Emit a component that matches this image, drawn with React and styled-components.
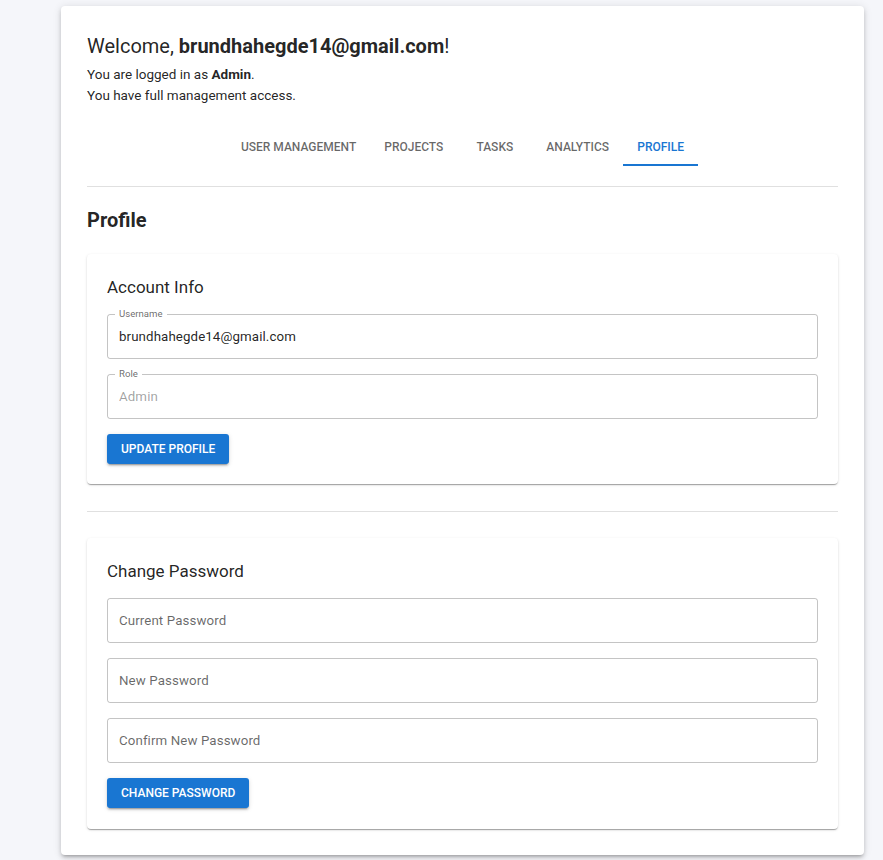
import React, { useState } from 'react';
import styled, { createGlobalStyle } from 'styled-components';

const GlobalStyle = createGlobalStyle`
  html, body {
    margin: 0;
    padding: 0;
    background: #f5f6fa;
    font-family: Roboto, "Helvetica Neue", Arial, sans-serif;
    color: rgba(0, 0, 0, 0.87);
  }
  * { box-sizing: border-box; }
`;

const Page = styled.div`
  padding: 6px 19px 5px 61px;
`;

const Panel = styled.main`
  background: #fff;
  border-radius: 4px;
  padding: 26px;
  box-shadow: 0 3px 3px -2px rgba(0, 0, 0, 0.2), 0 3px 4px 0 rgba(0, 0, 0, 0.14),
    0 1px 8px 0 rgba(0, 0, 0, 0.12);
`;

const Welcome = styled.h1`
  margin: 0;
  font-size: 20px;
  line-height: 28px;
  font-weight: 400;

  strong { font-weight: 700; }
`;

const Info = styled.p`
  margin: 0;
  font-size: 13.5px;
  line-height: 21px;

  &:first-of-type { margin-top: 4px; }
  strong { font-weight: 700; }
`;

const TabBar = styled.nav`
  display: flex;
  justify-content: center;
  margin-top: 18px;
`;

const Tab = styled.button`
  position: relative;
  height: 42px;
  min-width: 75px;
  padding: 3px 14px 0;
  border: none;
  background: none;
  font-family: inherit;
  font-size: 12px;
  font-weight: 500;
  letter-spacing: 0;
  text-transform: uppercase;
  color: ${p => (p.$active ? '#1976d2' : 'rgba(0, 0, 0, 0.6)')};
  cursor: pointer;

  &::after {
    content: '';
    position: absolute;
    left: 0;
    right: 0;
    bottom: 0;
    height: 2px;
    background: ${p => (p.$active ? '#1976d2' : 'transparent')};
  }
`;

const Divider = styled.hr`
  margin: ${p => p.$gap || 20}px 0 0;
  border: none;
  border-top: 1px solid #e0e0e0;
`;

const SectionTitle = styled.h2`
  margin: 19px 0 0;
  font-size: 20px;
  line-height: 28px;
  font-weight: 700;
`;

const Card = styled.section`
  margin-top: ${p => p.$top || 20}px;
  padding: 21px 20px ${p => p.$bottom || 20}px;
  background: #fff;
  border-radius: 4px;
  box-shadow: 0 2px 1px -1px rgba(0, 0, 0, 0.2), 0 1px 1px 0 rgba(0, 0, 0, 0.14),
    0 1px 3px 0 rgba(0, 0, 0, 0.12);
  display: flex;
  flex-direction: column;
  align-items: flex-start;
  gap: 15px;
`;

const CardTitle = styled.h3`
  margin: 0;
  font-size: 17px;
  line-height: 24px;
  font-weight: 400;
`;

const Field = styled.label`
  position: relative;
  display: flex;
  align-items: center;
  width: 100%;
  height: 45px;
  border: 1px solid rgba(0, 0, 0, 0.23);
  border-radius: 3px;
  padding: 0 11px;
`;

const FieldLabel = styled.span`
  position: absolute;
  top: -7px;
  left: 7px;
  padding: 0 4px;
  background: #fff;
  font-size: 9.6px;
  line-height: 12px;
  color: rgba(0, 0, 0, 0.6);
`;

const Input = styled.input`
  flex: 1;
  border: none;
  outline: none;
  background: transparent;
  padding: 0;
  font-family: inherit;
  font-size: 13.3px;
  letter-spacing: 0.1px;
  color: ${p => (p.disabled ? 'rgba(0, 0, 0, 0.38)' : 'rgba(0, 0, 0, 0.87)')};

  &::placeholder { color: rgba(0, 0, 0, 0.6); opacity: 1; }
`;

const Button = styled.button`
  height: 30px;
  padding: 0 14px;
  border: none;
  border-radius: 3px;
  background: #1976d2;
  color: #fff;
  font-family: inherit;
  font-size: 12px;
  font-weight: 500;
  letter-spacing: 0;
  text-transform: uppercase;
  cursor: pointer;
  box-shadow: 0 3px 1px -2px rgba(0, 0, 0, 0.2), 0 2px 2px 0 rgba(0, 0, 0, 0.14),
    0 1px 5px 0 rgba(0, 0, 0, 0.12);
`;

const tabs = ['User Management', 'Projects', 'Tasks', 'Analytics', 'Profile'];
const user = 'brundhahegde14@gmail.com';

const App = () => {
  const [active, setActive] = useState('Profile');

  return (
    <Page>
      <GlobalStyle />
      <Panel>
        <Welcome>
          Welcome, <strong>{user}</strong>!
        </Welcome>
        <Info>
          You are logged in as <strong>Admin</strong>.
        </Info>
        <Info>You have full management access.</Info>

        <TabBar>
          {tabs.map(t => (
            <Tab key={t} $active={t === active} onClick={() => setActive(t)}>
              {t}
            </Tab>
          ))}
        </TabBar>
        <Divider />

        <SectionTitle>Profile</SectionTitle>

        <Card>
          <CardTitle>Account Info</CardTitle>
          <Field>
            <FieldLabel>Username</FieldLabel>
            <Input defaultValue={user} />
          </Field>
          <Field>
            <FieldLabel>Role</FieldLabel>
            <Input value="Admin" disabled readOnly />
          </Field>
          <Button>Update Profile</Button>
        </Card>

        <Divider $gap={27} />

        <Card $top={26} $bottom={21}>
          <CardTitle>Change Password</CardTitle>
          <Field>
            <Input type="password" placeholder="Current Password" />
          </Field>
          <Field>
            <Input type="password" placeholder="New Password" />
          </Field>
          <Field>
            <Input type="password" placeholder="Confirm New Password" />
          </Field>
          <Button>Change Password</Button>
        </Card>
      </Panel>
    </Page>
  );
};

export default App;
